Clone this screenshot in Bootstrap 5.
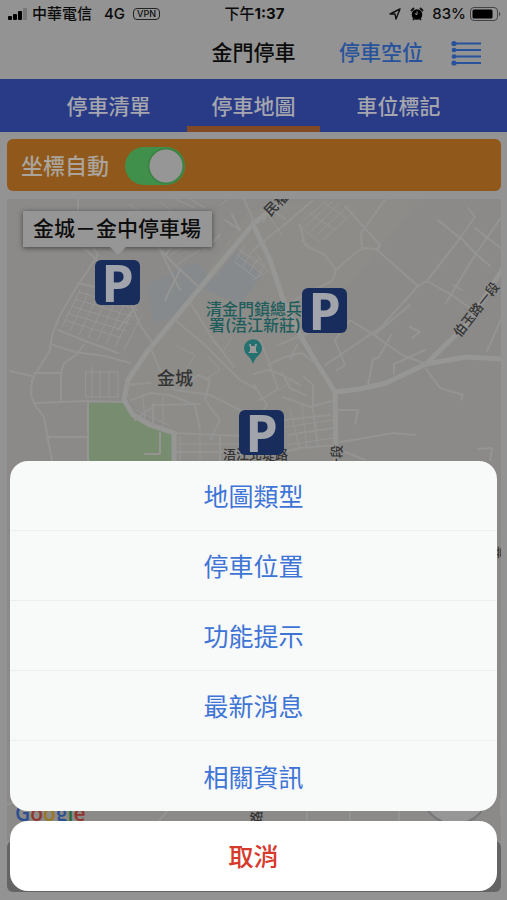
<!DOCTYPE html>
<html lang="zh-Hant">
<head>
<meta charset="utf-8">
<meta name="viewport" content="width=device-width, initial-scale=1">
<title>金門停車</title>
<link href="https://cdn.jsdelivr.net/npm/bootstrap@5.3.0/dist/css/bootstrap.min.css" rel="stylesheet">
<style>
  body { background: #939393; color: #0b0b0b; font-family: Inter, "Noto Sans CJK TC", sans-serif; font-weight: 500; }
  .status-bar { height: 28px; font-size: 15px; line-height: 28px; padding: 0 6px 0 8px; }
  .status-bar .cell { flex: 1 1 0; }
  .network { margin-left: 12px; }
  .vpn { font-size: 9px; line-height: 10px; border: 1px solid #222; border-radius: 4px; padding: 0 3px; }
  .title-bar { height: 51px; font-size: 21px; line-height: 28px; padding: 0 24px 2px; }
  .title-bar .side { flex: 1 1 0; }
  .title-bar h1 { font-size: 21px; line-height: 28px; font-weight: 500; }
  .title-bar a, .title-bar button { color: #28529b; }
  .title-bar .side { gap: 28px; }
  .tabs { background: #293b87; height: 53px; padding: 0 36px; }
  .tabs a { color: #a5a6ae; font-size: 21px; line-height: 28px; flex: 1 1 0; border-bottom: 6px solid transparent; margin: 0 6px; padding-top: 8px; }
  .tabs a.active { border-color: #824a24; }
  .auto-bar { background: #90581a; color: #aaa49c; height: 52px; border-radius: 6px; font-size: 22px; padding: 2px 14px 0; }
  .auto-bar .form-check-input { width: 60px; height: 38px; border: 0; background-color: #40904c; background-image: radial-gradient(circle, #969696 0 16px, #37803f 17px, #40904c 19px) !important; background-size: 38px 38px; background-position: right center; }
  .auto-bar .form-check-input:checked { background-color: #40904c; }
  .map-area { background: #8b8a88; overflow: hidden; }
  .map-area .roads { position: absolute; inset: 0; width: 100%; height: 100%; }
  .pin { position: absolute; width: 45px; height: 45px; background: #192d5d; border-radius: 6px; color: #a1a4aa; font: 700 52px/44px "Open Sans", sans-serif; }
  .callout { position: absolute; left: 16px; top: 12px; background: #969696; color: #0d0d0d; font-size: 21px; line-height: 36px; padding: 0 11px 0 10px; box-shadow: 0 1px 5px #444; white-space: nowrap; }
  .callout::after { content: ""; position: absolute; left: 50%; top: 100%; border: 8px solid transparent; border-top-color: #969696; border-bottom: 0; margin-left: -8px; }
  .bottom-bar { height: 51px; background: #646464; border-radius: 6px; }
  .sheet { padding: 10px 10px 9px; gap: 10px; }
  .sheet-list { border-radius: 18px; }
  .sheet-list .list-group-item { height: 70px; padding-top: 12px; font-size: 25px; line-height: 36px; background: #f8f9f9; color: #3d74d6; border: 0; border-bottom: 1px solid #edefef; padding-top: 18px; padding-bottom: 15px; }
  .sheet-list .list-group-item:last-child { border-bottom: 0; }
  .cancel { height: 70px; padding-top: 8px; border-radius: 18px; font-size: 25px; line-height: 36px; background: #fff; color: #d63a2c; font-weight: 500; }
</style>
<script src="https://cdn.jsdelivr.net/npm/bootstrap@5.3.0/dist/js/bootstrap.bundle.min.js"></script>
</head>
<body>
<div class="d-flex flex-column min-vh-100">
  <div class="status-bar d-flex align-items-center">
    <div class="cell d-flex align-items-center">
      <svg width="20" height="12" viewBox="0 0 20 12" aria-hidden="true"><rect y="8" width="4" height="4" rx="1"/><rect x="5" y="6" width="4" height="6" rx="1"/><rect x="10" y="3" width="4" height="9" rx="1"/><rect x="15" y="0" width="4" height="12" rx="1" fill="#777"/></svg>
      <span class="ms-1">中華電信</span><span class="network">4G</span><span class="vpn ms-2">VPN</span>
    </div>
    <div>下午<b>1:37</b></div>
    <div class="cell d-flex align-items-center justify-content-end">
      <svg width="14" height="14" viewBox="0 0 14 14" aria-hidden="true"><path d="M12 2 2 7h5l1 5z" fill="none" stroke="#111" stroke-width="1.4" stroke-linejoin="round"/></svg>
      <svg class="mx-2" width="14" height="14" viewBox="0 0 14 14" aria-hidden="true"><circle cx="7" cy="7.500" r="5.300"/><path d="M1 4 4 1M13 4l-3-3M3 13l1.500-2M11 13l-1.500-2" stroke="#111" stroke-width="1.800"/><path d="M7 4.500v3.200L4.800 6.500" stroke="#939393" fill="none"/></svg>
      <span>83%</span>
      <svg class="ms-1" width="31" height="14" viewBox="0 0 31 14" aria-hidden="true"><rect x=".5" y=".5" width="27" height="13" rx="3.500" fill="none" stroke="#444"/><rect x="2.500" y="2.500" width="20" height="9" rx="1.500"/><path d="M29 4.500q2.500 2.500 0 5z" fill="#444"/></svg>
    </div>
  </div>

  <header class="title-bar d-flex align-items-center">
    <div class="side"></div>
    <h1 class="m-0">金門停車</h1>
    <div class="side d-flex align-items-center justify-content-end">
      <a href="#spaces" class="text-decoration-none">停車空位</a>
      <button type="button" class="btn p-0 border-0 d-flex" aria-label="選單">
        <svg width="32" height="26" viewBox="0 0 32 26" fill="currentColor" aria-hidden="true"><path d="M3 3.500h27M3 10h27M3 16.500h27M3 23h27" stroke="currentColor" stroke-width="2.200"/><circle cx="3" cy="3.500" r="2.600"/><circle cx="3" cy="10" r="2.300"/><circle cx="3" cy="16.500" r="2.300"/><circle cx="3" cy="23" r="2.600"/></svg>
      </button>
    </div>
  </header>

  <nav class="tabs d-flex">
    <a href="#list" class="text-center text-decoration-none d-flex align-items-center justify-content-center">停車清單</a>
    <a href="#map" class="active text-center text-decoration-none d-flex align-items-center justify-content-center" aria-current="page">停車地圖</a>
    <a href="#mark" class="text-center text-decoration-none d-flex align-items-center justify-content-center">車位標記</a>
  </nav>

  <main class="d-flex flex-column flex-grow-1 pb-2" style="padding:7px 6px 0 7px">
    <div class="auto-bar form-switch d-flex align-items-center">
      <label for="auto">坐標自動</label>
      <input class="form-check-input m-0 ms-3" type="checkbox" role="switch" id="auto" checked>
    </div>

    <section class="map-area position-relative flex-grow-1 mt-2">
      <svg class="roads" viewBox="7 199 494 643" preserveAspectRatio="xMinYMin slice" aria-hidden="true">
        <path d="M175 315 250 210 320 199H420L300 345 335 395V461H175V430L125 400 130 370Z" fill="#8d8c89"/>
        <path d="M145 285 195 262 215 280 180 312 155 325Z" fill="#878a8d"/>
        <path d="M205 290 237 250 262 275 240 305Z" fill="#878a8d"/>
        <path d="M88 403H124L136 418 150 426 173 433V461H88Z" fill="#788c6f"/>
        <g fill="none" stroke="#969695" stroke-linejoin="round" stroke-linecap="round">
          <g stroke-width="5">
            <path d="M290 195 253 224 190 300 147 352 128 380 124 400 133 415 150 425 174 433V465"/>
            <path d="M253 224 270 260 285 305 303 340 313 357 335 392 336 465"/>
            <path d="M335 392 360 389 386 383 426 364 466 357 503 359"/>
            <path d="M426 364 466 325 485 297 503 268"/>
          </g>
          <g stroke-width="2" stroke="#949493">
            <path d="M78 199V225L98 255 78 285 60 315 52 335 50 350 32 380 31 395 35 405 44 417 48 440 53 465"/>
            <path d="M35 403 88 401 124 402M47 437H88M88 401V461M160 433V454H145M61 373V401M34 373H61L64 363 76 355 84 345"/>
            <path d="M78 283 95 287 105 284M84 248 100 263 125 290 140 325 152 342M118 330 140 300M160 250 180 290"/>
            <path d="M53 345 75 352 105 356 130 363M58 330 88 342 118 353"/>
            <path d="M175 320 205 345 240 380 258 390M190 302 210 335 234 367M150 346 160 370 175 390 210 395 240 410"/>
            <path d="M131 400 150 393 170 395 195 405 200 430M135 420 155 405 200 404M153 404V424M125 385 150 383M180 390 198 375 210 380 205 400 220 420 210 440M176 433 245 436M176 452H240M220 435V460M240 435V460"/>
            <path d="M130 215 170 260 202 290M155 245 180 270 165 300M175 225 205 250 220 235M165 255 200 215M225 220 240 230 232 215M244 199 255 224"/>
            <path d="M253 250 290 220 312 201M285 219 270 208 263 222M300 225 305 245 325 255 336 270 332 281 300 297 280 310M302 240 310 248M345 206 380 245 378 249 362 248 361 233 385 200M336 270 355 253 364 248 376 249 418 286 381 327 340 355 325 365"/>
            <path d="M418 286 427 281 441 289 452 295 475 312M427 281 460 238 475 217 468 208M460 238 438 220M475 228 503 250M446 303 475 255 503 215M453 285 462 290M461 238 475 253 490 266"/>
            <path d="M374 335 402 355 426 364M374 335 350 320 335 340 345 365 337 370M374 335 410 305M391 335 383 350 378 358 373 359 368 385M394 374V364L425 350M410 327 420 332 412 338M426 369 440 388 463 395 461 400M487 351 503 315"/>
            <path d="M335 410H358L355 424M340 442 365 438 393 433 415 435M337 445 300 448 284 452M285 420 330 415M288 435 333 428M304 377 313 385V410L318 447M283 397 310 407 332 401M345 452 365 460"/>
            <path d="M268 365 285 357 302 353 315 363M254 374 268 370 278 373 300 385M260 340 270 365 278 389 260 400M278 345 315 330M254 385 267 405 262 413M282 373 290 388 305 395M297 345 290 360"/>
            <path d="M478 449 492 448 490 460M10 371 32 376M7 805Q25 795 42 830M155 825 170 808M307 812V820M350 812V820M399 812V820M501 799V815"/>
          </g>
          <g stroke-width="1">
            <path d="M64 320 122 338M67 313 126 331M71 306 130 324M75 299 134 317M79 292 138 310M62 327 80 290M70 331 88 293M79 335 97 297M88 338 106 300M97 341 115 302M106 344 124 304M115 347 133 310M124 350 142 315"/>
            <path d="M302 222 326 201M306 226 333 201M312 230 340 203M318 234 348 206M323 240 354 212M298 225 320 242M310 213 335 230M323 202 347 219"/>
            <path d="M130 205 145 215M160 202 170 210M175 199 195 208M190 199 205 208M220 205 228 199M165 245 178 236M171 255 190 242M177 265 200 250"/>
            <path d="M86 372H118V397H86ZM92 367V398M100 371V398M109 371V398M136 410 170 426M143 398 145 421M163 397V429M180 437V460M200 436V460M180 444H240M211 340 223 352 232 337M175 345 195 355 185 372M207 355 220 370 205 380"/>
            <path d="M240 250 265 267M237 255 261 273M234 261 257 279M245 245 236 260M252 251 243 266M259 256 250 272M266 262 257 278"/>
            <path d="M290 409 300 450M302 405 307 448M285 427 333 420M287 445 333 438M280 390 293 378M268 215 282 235M253 280 270 270M256 253 268 272M254 264 262 258"/>
          </g>
        </g>
        <g fill="#343434" font-size="14">
          <text x="157" y="385" font-size="18">金城</text>
          <text transform="translate(270 217) rotate(-45)">民權路</text>
          <text transform="translate(460 338) rotate(-52)" font-size="13">伯玉路一段</text>
          <text x="223" y="459" font-size="13">浯江北堤路</text>
          <text transform="translate(341 471) rotate(-90)" font-size="13">一段</text>
          <text transform="translate(261 824) rotate(-90)" font-size="13">路一段</text>
          <text transform="translate(504 559) rotate(-90)" font-size="13">昔</text>
          <g fill="#1f5d5c" font-size="16"><text x="206" y="315">清金門鎮總兵</text><text x="209" y="331">署(浯江新莊)</text></g>
        </g>
        <path d="M253 364q-2-6-6-9a9 9 0 1 1 12 0q-4 3-6 9z" fill="#25716f"/>
        <path d="M249 344h2v2h4v-2h2l-1 4v3l2 2h-10l2-2v-3z" fill="#999"/>
        <text x="15" y="821" font-family="Open Sans, sans-serif" font-size="21" font-weight="600" fill="#2c4f91">G<tspan fill="#91362e">o</tspan><tspan fill="#98791f">o</tspan>g<tspan fill="#286a3b">l</tspan><tspan fill="#91362e">e</tspan></text>
        <circle cx="455" cy="790" r="34" fill="#969696" stroke="#777" stroke-width="2"/>
      </svg>
      <div class="callout">金城－金中停車場</div>
      <div class="pin text-center" style="left:88px;top:61px">P</div>
      <div class="pin text-center" style="left:295px;top:89px">P</div>
      <div class="pin text-center" style="left:232px;top:211px">P</div>
    </section>
    <div class="bottom-bar"></div>
  </main>
</div>

<div class="sheet fixed-bottom d-flex flex-column" role="dialog" aria-label="選單">
  <div class="sheet-list list-group text-center">
    <button type="button" class="list-group-item list-group-item-action text-center">地圖類型</button>
    <button type="button" class="list-group-item list-group-item-action text-center">停車位置</button>
    <button type="button" class="list-group-item list-group-item-action text-center">功能提示</button>
    <button type="button" class="list-group-item list-group-item-action text-center">最新消息</button>
    <button type="button" class="list-group-item list-group-item-action text-center">相關資訊</button>
  </div>
  <button type="button" class="cancel btn w-100 border-0">取消</button>
</div>
</body>
</html>
